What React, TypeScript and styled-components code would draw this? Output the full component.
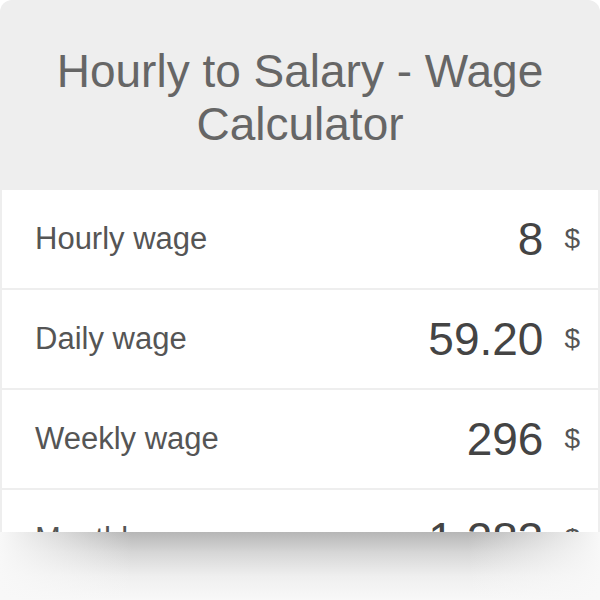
import styled, { createGlobalStyle } from "styled-components";

const GlobalStyle = createGlobalStyle`
  html, body {
    margin: 0;
    padding: 0;
    background: #ffffff;
  }

  body {
    font-family: "Liberation Sans", Arial, sans-serif;
  }
`;

type WageRow = {
  label: string;
  value: string;
};

const rows: WageRow[] = [
  { label: "Hourly wage", value: "8" },
  { label: "Daily wage", value: "59.20" },
  { label: "Weekly wage", value: "296" },
  { label: "Monthly wage", value: "1,283" },
];

export default function App() {
  return (
    <>
      <GlobalStyle />
      <StyledPage>
        <StyledCard>
          <StyledHeader>
            <StyledTitle>Hourly to Salary - Wage Calculator</StyledTitle>
          </StyledHeader>

          <StyledRows>
            {rows.map((row) => (
              <StyledRow key={row.label}>
                <StyledLabel>{row.label}</StyledLabel>

                <StyledValueWrapper>
                  <StyledValue>{row.value}</StyledValue>
                  <StyledUnit>$</StyledUnit>
                </StyledValueWrapper>
              </StyledRow>
            ))}
          </StyledRows>
        </StyledCard>

        <StyledFade />
      </StyledPage>
    </>
  );
}

const StyledPage = styled.div`
  width: 600px;
  height: 600px;
  display: flex;
  flex-direction: column;
  overflow: hidden;
`;

const StyledCard = styled.div`
  height: 532px;
  overflow: hidden;
  background-color: #eeeeee;
  border-radius: 12px 12px 0 0;
  flex-shrink: 0;
`;

const StyledHeader = styled.div`
  height: 190px;
  box-sizing: border-box;
  padding: 45px 50px 0;
`;

const StyledTitle = styled.h1`
  margin: 0;
  font-family: "Liberation Sans", Arial, sans-serif;
  font-weight: 400;
  font-size: 46px;
  line-height: 53px;
  color: #666666;
  text-align: center;
`;

const StyledRows = styled.div`
  display: grid;
  grid-auto-rows: 98px;
  row-gap: 2px;
  padding: 0 2px;
`;

const StyledRow = styled.div`
  display: flex;
  align-items: center;
  justify-content: space-between;
  padding: 0 18px 0 33px;
  background-color: #ffffff;
`;

const StyledLabel = styled.span`
  font-size: 31px;
  color: #555555;
`;

const StyledValueWrapper = styled.div`
  display: flex;
  align-items: center;
  gap: 21px;
`;

const StyledValue = styled.span`
  font-size: 46px;
  color: #444444;
`;

const StyledUnit = styled.span`
  font-size: 28px;
  color: #555555;
`;

const StyledFade = styled.div`
  flex: 1;
  background:
    linear-gradient(
      to right,
      #f8f8f8 0%,
      rgba(248, 248, 248, 0) 22%,
      rgba(248, 248, 248, 0) 78%,
      #f8f8f8 100%
    ),
    linear-gradient(
      to bottom,
      #b6b6b6 0%,
      #d6d6d6 30%,
      #efefef 65%,
      #f8f8f8 100%
    );
`;
